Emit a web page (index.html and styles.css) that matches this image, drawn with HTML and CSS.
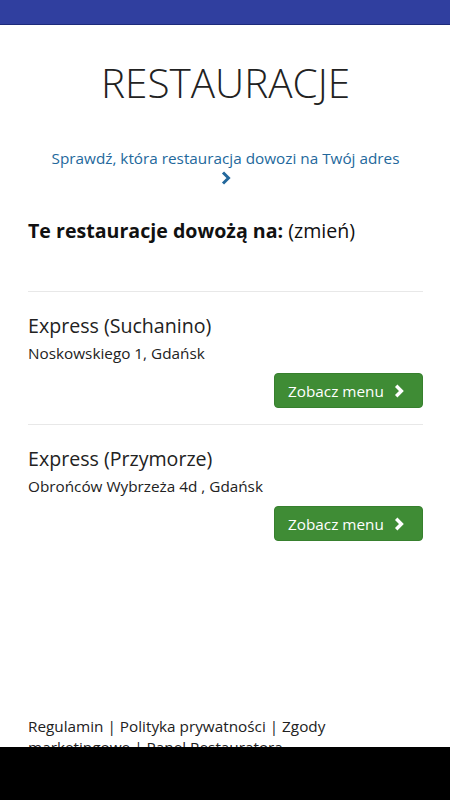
FILE: index.html
```html
<!DOCTYPE html>
<html lang="pl">
<head>
    <meta charset="UTF-8">
    <meta name="viewport" content="width=device-width, initial-scale=1.0">
    <link rel="stylesheet" href="styles.css">
</head>
<body>
    <div class="status-bar"></div>

    <div class="page">
        <h1 class="page-title">RESTAURACJE</h1>

        <a href="#" class="check-link">
            Sprawdź, która restauracja dowozi na Twój adres
            <svg class="check-chevron" viewBox="0 0 10 14" width="10" height="14">
                <path d="M2 1.5 L7.5 7 L2 12.5" fill="none" stroke="currentColor" stroke-width="3"/>
            </svg>
        </a>

        <h2 class="deliver-to"><strong>Te restauracje dowożą na:</strong> <span class="change">(zmień)</span></h2>

        <ul class="restaurant-list">
            <li class="restaurant">
                <div class="restaurant-name">Express (Suchanino)</div>
                <div class="restaurant-address">Noskowskiego 1, Gdańsk</div>
                <div class="restaurant-actions">
                    <a href="#" class="menu-button">Zobacz menu
                        <svg viewBox="0 0 10 14" width="10" height="14">
                            <path d="M2.2 1.8 L7.4 7 L2.2 12.2" fill="none" stroke="currentColor" stroke-width="3.4"/>
                        </svg>
                    </a>
                </div>
            </li>
            <li class="restaurant">
                <div class="restaurant-name">Express (Przymorze)</div>
                <div class="restaurant-address">Obrońców Wybrzeża 4d , Gdańsk</div>
                <div class="restaurant-actions">
                    <a href="#" class="menu-button">Zobacz menu
                        <svg viewBox="0 0 10 14" width="10" height="14">
                            <path d="M2.2 1.8 L7.4 7 L2.2 12.2" fill="none" stroke="currentColor" stroke-width="3.4"/>
                        </svg>
                    </a>
                </div>
            </li>
        </ul>

        <footer class="footer">
            <a href="#">Regulamin</a> | <a href="#">Polityka prywatności</a> | <a href="#">Zgody marketingowe</a> | <a href="#">Panel Restauratora</a>
        </footer>
    </div>

    <div class="nav-bar"></div>
</body>
</html>
```

FILE: styles.css
```css
/* Base styles */
:root {
    --bar-blue: #303f9f;
    --text: #222222;
    --link: #23689c;
    --green: #3f8c35;
    --rule: #e8e8e8;
}

body {
    font-family: 'Open Sans', 'Noto Sans', sans-serif;
    font-size: 15.3px;
    margin: 0;
    background-color: #ffffff;
    color: var(--text);
}

a {
    color: inherit;
    text-decoration: none;
}

.status-bar {
    height: 24px;
    background-color: var(--bar-blue);
    border-bottom: 1px solid #1d2a7a;
}

.page {
    padding: 0 27px 0 28px;
}

/* Header */
.page-title {
    margin: 34px 0 0 0;
    font-size: 40.5px;
    font-weight: 300;
    line-height: 48px;
    text-align: center;
    color: #222;
}

.check-link {
    display: block;
    margin-top: 40px;
    font-size: 15.3px;
    line-height: 22px;
    text-align: center;
    color: var(--link);
}

.check-chevron {
    display: block;
    margin: 2px auto 0;
}

.deliver-to {
    margin: 33px 0 0 0;
    font-size: 19.6px;
    font-weight: normal;
    line-height: 26px;
    color: #111;
}

.deliver-to strong {
    font-weight: 700;
}

/* Restaurant list */
.restaurant-list {
    list-style: none;
    margin: 47px 0 0 0;
    padding: 0;
}

.restaurant {
    border-top: 1px solid var(--rule);
    padding: 20px 0 16px;
}

.restaurant-name {
    font-size: 19.6px;
    line-height: 28px;
}

.restaurant-address {
    margin-top: 3px;
    font-size: 15.3px;
    line-height: 20px;
}

.restaurant-actions {
    display: flex;
    justify-content: flex-end;
    margin-top: 10px;
}

.menu-button {
    display: flex;
    align-items: center;
    gap: 10px;
    width: 149px;
    height: 35px;
    box-sizing: border-box;
    padding: 0 0 0 13px;
    background-color: var(--green);
    border: 1px solid #37802e;
    border-radius: 4px;
    color: #ffffff;
    font-size: 15.3px;
}

/* Footer */
.footer {
    margin-top: 159px;
    font-size: 15.3px;
    line-height: 21px;
    color: #222;
}

.nav-bar {
    position: fixed;
    left: 0;
    right: 0;
    bottom: 0;
    height: 53px;
    background-color: #000000;
}
```
